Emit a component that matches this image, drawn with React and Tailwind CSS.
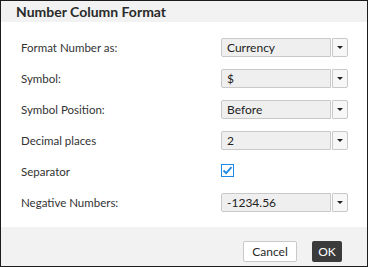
import React from "react";

const rows = [
  { label: "Format Number as:", value: "Currency" },
  { label: "Symbol:", value: "$" },
  { label: "Symbol Position:", value: "Before" },
  { label: "Decimal places", value: "2" },
  { label: "Separator", check: true },
  { label: "Negative Numbers:", value: "-1234.56" },
];

const Select = ({ value }) => (
  <div className="flex h-[19px] w-[127px]">
    <div className="flex-1 flex items-center pl-[5px] bg-[#efefef] border border-[#c9c9c9] rounded-l-[2px] text-[12px] text-[#222]">
      {value}
    </div>
    <div className="ml-[1px] w-[16px] flex items-center justify-center bg-[#f7f7f7] border border-[#c9c9c9] rounded-r-[2px]">
      <div className="w-0 h-0 border-l-[3px] border-r-[3px] border-t-[3px] border-l-transparent border-r-transparent border-t-[#222]" />
    </div>
  </div>
);

const Check = () => (
  <div className="w-[13px] h-[13px] -mt-[3px] border border-[#1e88e5] bg-white flex items-center justify-center">
    <svg width="11" height="11" viewBox="0 0 11 11">
      <path d="M1.5 5.5 L4.2 8.2 L9.5 2.2" fill="none" stroke="#1e88e5" strokeWidth="1.8" />
    </svg>
  </div>
);

export default function App() {
  return (
    <div className="w-[368px] h-[267px] border border-[#1c1c1c] bg-white flex flex-col" style={{ fontFamily: "Lato, 'Noto Sans', sans-serif" }}>
      <div className="h-[21px] bg-[#f2f2f2] flex items-center pl-[15px] text-[14px] font-bold text-[#2a2a2a]">
        Number Column Format
      </div>
      <div className="flex-1 pt-[16px] pl-[20px]">
        {rows.map((r, i) => (
          <div key={i} className="flex items-center h-[19px] mb-[12px]">
            <div className="w-[200px] text-[11.5px] text-[#333]">{r.label}</div>
            {r.check ? <Check /> : <Select value={r.value} />}
          </div>
        ))}
      </div>
      <div className="h-[39px] bg-[#f2f2f2] flex items-start justify-end gap-[15px] pr-[25px] pt-[14px]">
        <button className="h-[21px] w-[54px] bg-white border border-[#c9c9c9] rounded-[2px] text-[12px] text-[#2a2a2a]">Cancel</button>
        <button className="h-[21px] w-[30px] bg-[#3b3b3b] rounded-[2px] text-[12px] text-white">OK</button>
      </div>
    </div>
  );
}
